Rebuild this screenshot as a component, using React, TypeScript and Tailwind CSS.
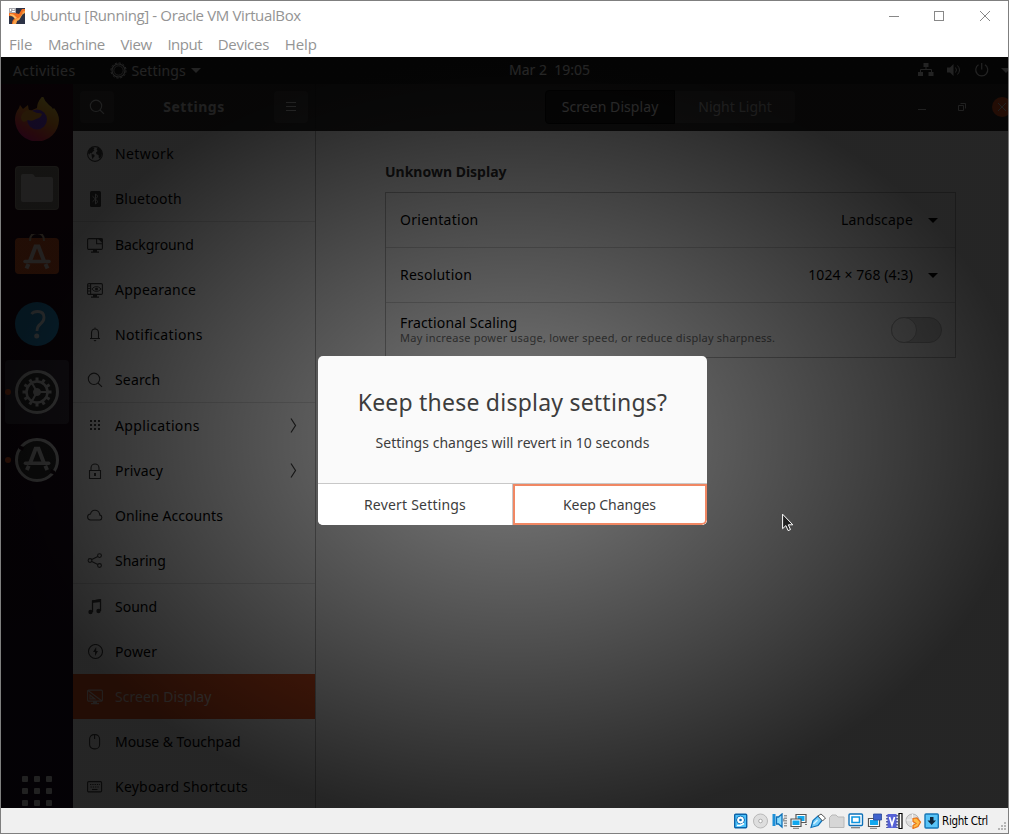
import React from "react";

type IconProps = { name: string };

function Icon({ name }: IconProps) {
  const s = { fill: "none", stroke: "currentColor", strokeWidth: 1.1 } as const;
  const shapes: Record<string, React.ReactNode> = {
    network: (
      <>
        <circle cx="8" cy="8" r="7.4" {...s} />
        <path fill="currentColor" d="M1 6 2.500 3 5.500 1.200 7.500 2 6.500 3.800 7.500 4.500 5.500 6 4.800 7.500 2.800 7 3 8.500 1.500 8z M4.500 8 7 8.500 7.800 10 6.300 11.800 5.800 13.500 4.800 11z M9.500 3 11 1.500 13.500 3.500 15 7 14.500 10 13 12.500 11.800 12 11.500 9 9.500 8.300 9 6.500 10.500 5z" />
      </>
    ),
    bluetooth: (
      <>
        <rect x="3" y="0" width="11" height="16" rx="1.500" fill="currentColor" />
        <path d="M5.500 5.200 11 10.600 8.500 13V3L11 5.400 5.500 10.800" fill="none" stroke="#e6e6e6" strokeWidth="1" />
      </>
    ),
    background: (
      <>
        <rect x=".6" y="1.600" width="14.800" height="10.800" rx="1.200" {...s} />
        <path d="M9.600 1.500v5.300h5.800" {...s} />
        <path d="M10.500 1.500h5v4.500z" fill="currentColor" />
        <path d="M6 12.500h4v2h2v1.200H4v-1.200h2z" fill="currentColor" />
      </>
    ),
    appearance: (
      <>
        <rect x=".6" y="1.600" width="14.800" height="10.800" rx="1.200" {...s} />
        <path d="M3.600 2v10M1 4h2.500M1 6.500h2.500M1 9h2.500" {...s} />
        <path d="M4.800 7q4.500-5 9.400 0-5 5-9.400 0z" {...s} strokeWidth=".9" />
        <circle cx="9.500" cy="7" r="1.500" fill="currentColor" />
        <path d="M6 12.500h4v2h2v1.200H4v-1.200h2z" fill="currentColor" />
      </>
    ),
    bell: (
      <>
        <path d="M3 11.500h10M4.500 11V6Q4.500 2 8 2t3.500 4v5M8 .5V2" {...s} />
        <path d="M6.500 13h3l-1 1.300h-1z" fill="currentColor" />
      </>
    ),
    search: (
      <>
        <circle cx="7" cy="6.800" r="5.700" {...s} />
        <path d="m11 11 4 3.800" {...s} />
      </>
    ),
    apps: (
      <path
        fill="currentColor"
        d="M3 2h2v2H3zM7 2h2v2H7zM11 2h2v2h-2zM3 6h2v2H3zM7 6h2v2H7zM11 6h2v2h-2zM3 10h2v2H3zM7 10h2v2H7zM11 10h2v2h-2z"
      />
    ),
    lock: (
      <>
        <path d="M2.500 7.500h11v8h-11zM4 7.500V5a4 4 0 0 1 8 0v2.500" {...s} />
        <path d="M7 10h2v3H7z" fill="currentColor" />
      </>
    ),
    cloud: <path d="M3.700 12a3 3 0 0 1-.2-6 4.600 4.600 0 0 1 8.900-.6q.6 1 .3 1.500a2.600 2.600 0 0 1 .1 5.100z" {...s} />,
    share: (
      <>
        <circle cx="3" cy="7.500" r="1.900" {...s} />
        <circle cx="12.500" cy="2.600" r="1.900" {...s} />
        <circle cx="12.500" cy="12.500" r="1.900" {...s} />
        <path d="m4.800 6.600 6-3M4.800 8.500l6 3" {...s} />
      </>
    ),
    sound: (
      <>
        <path d="M5.500 13V2l8-1.300V12" {...s} strokeWidth="1.300" />
        <path d="M5 1.500 14 0v3l-9 1z" fill="currentColor" />
        <circle cx="3.500" cy="13" r="2.200" fill="currentColor" />
        <circle cx="11.500" cy="12" r="2.200" fill="currentColor" />
      </>
    ),
    power: (
      <>
        <circle cx="8.500" cy="7.500" r="7" {...s} />
        <path d="m9.200 3-3.200 5h2v4l3-5H9.200z" fill="currentColor" />
      </>
    ),
    display: (
      <>
        <rect x=".6" y="1.100" width="14.800" height="11" rx="1.200" {...s} />
        <path d="m1 1.500 14 10.500M3 6v4h5zM5 8.500v1.500" {...s} />
        <path d="M6 12h4v2h2v1.200H4V14h2z" fill="currentColor" />
      </>
    ),
    mouse: (
      <>
        <rect x="2.600" y=".6" width="10" height="14.300" rx="4.500" {...s} />
        <path d="M7.600 1v4" {...s} />
      </>
    ),
    keyboard: (
      <>
        <rect x=".6" y="2.600" width="14" height="10.300" rx="1.200" {...s} />
        <path d="M3 5.500h10M3.500 8h9" {...s} strokeDasharray="1.300 1" />
        <path d="M5 10.500h5.500" {...s} />
      </>
    ),
  };
  return (
    <svg className="h-4 w-4 shrink-0" viewBox="0 0 16 16">
      {shapes[name]}
    </svg>
  );
}

type Row = { icon: string; label: string; tracking: string; sep?: boolean; arrow?: boolean; active?: boolean };

const rows: Row[] = [
  { icon: "network", label: "Network", tracking: "tracking-[0.4px]" },
  { icon: "bluetooth", label: "Bluetooth", tracking: "tracking-[0.22px]" },
  { icon: "background", label: "Background", tracking: "tracking-[-0.1px]", sep: true },
  { icon: "appearance", label: "Appearance", tracking: "tracking-[0.25px]" },
  { icon: "bell", label: "Notifications", tracking: "tracking-[0.35px]" },
  { icon: "search", label: "Search", tracking: "tracking-[0.15px]" },
  { icon: "apps", label: "Applications", tracking: "tracking-[0.36px]", sep: true, arrow: true },
  { icon: "lock", label: "Privacy", tracking: "tracking-[0.2px]", arrow: true },
  { icon: "cloud", label: "Online Accounts", tracking: "tracking-[0.07px]" },
  { icon: "share", label: "Sharing", tracking: "tracking-normal" },
  { icon: "sound", label: "Sound", tracking: "tracking-normal", sep: true },
  { icon: "power", label: "Power", tracking: "tracking-[0.15px]" },
  { icon: "display", label: "Screen Display", tracking: "tracking-[0.05px]", active: true },
  { icon: "mouse", label: "Mouse & Touchpad", tracking: "tracking-[-0.05px]" },
  { icon: "keyboard", label: "Keyboard Shortcuts", tracking: "tracking-[0.22px]" },
];

function TitleBar() {
  return (
    <div className="flex h-[29px] shrink-0 items-center bg-white pl-2 text-[#949494] font-['Open_Sans',sans-serif]">
      <svg className="h-4 w-4" viewBox="0 0 16 16">
        <path d="M0 0h16v16H0z" fill="#2d3346" />
        <path d="M0 5h6l4 1 3-5h3v3q-3 1-4 4-1 3-4 4l-1 4H3q0-5 4-6-1-2-7-2z" fill="#f37021" />
        <path d="M4 16q0-4 4-5.500 4-1 6-7l2-.5v2q-3 1-4 4-1 3-4 4l-1 3z" fill="#f8a44b" />
        <path d="M1 6q4 0 5 2l2 2-2 1Q4 8 1 7z" fill="#ffc06a" />
        <path d="M0 0h7v5H0z" fill="#a9a9ad" />
        <path d="M1.500 1v2M3.500 1.500h2M3 3.500h3" stroke="#fff" fill="none" />
      </svg>
      <span className="ml-[5px] pb-0.5 text-[15px] leading-5 tracking-[-0.37px] whitespace-nowrap">
        Ubuntu [Running] - Oracle VM VirtualBox
      </span>
      <svg className="mr-4 ml-auto h-3 w-[103px]" viewBox="0 0 103 12" fill="none" stroke="#888" shapeRendering="crispEdges">
        <path d="M0 6.500h10M45.500 1.500h9v9h-9z" />
        <path d="m91 1 10 10M101 1 91 11" shapeRendering="auto" />
      </svg>
    </div>
  );
}

function MenuBar() {
  return (
    <div className="flex h-[27px] shrink-0 items-center gap-[15.7px] bg-white pt-px pl-2 text-[15px] leading-5 tracking-[-0.4px] text-[#949494] font-['Open_Sans',sans-serif]">
      <span className="tracking-[-0.1px]">File</span>
      <span>Machine</span>
      <span>View</span>
      <span className="tracking-[-0.5px]">Input</span>
      <span className="tracking-[-0.3px]">Devices</span>
      <span className="tracking-[-0.1px]">Help</span>
    </div>
  );
}

function TopBar() {
  return (
    <div className="grid h-[27px] shrink-0 grid-cols-[1fr_auto_1fr] items-center bg-[#1b1b1b] text-[14px] leading-5 text-[#e8e8e8]">
      <div className="flex items-center">
        <span className="ml-3 tracking-[0.42px]">Activities</span>
        <svg className="ml-[34px] h-[17px] w-[17px]" viewBox="0 0 17 17" fill="none" stroke="currentColor">
          <circle cx="8.500" cy="8.500" r="6.500" strokeWidth="1.100" />
          <circle cx="8.500" cy="8.500" r="7.600" strokeWidth="1" strokeDasharray="2.200 1.780" />
          <circle cx="8.500" cy="8.500" r="4.700" strokeWidth=".8" />
        </svg>
        <span className="ml-[5px] tracking-[0.12px]">Settings</span>
        <svg className="ml-[5px] h-[5px] w-[10px]" viewBox="0 0 10 5" fill="currentColor">
          <path d="M0 0h10L5 5z" />
        </svg>
      </div>
      <span className="mr-[-79px] pb-0.5 whitespace-pre">Mar 2  19:05</span>
      <div className="flex items-center justify-end pr-2 pb-px">
        <svg className="h-4 w-4" viewBox="0 0 16 16" fill="currentColor">
          <path d="M5.500 1h5v4h-5zM0 10h5v4H0zM10.500 10h5v4h-5z" />
          <path d="M8 5v3M2.500 10V7.500h11V10" fill="none" stroke="currentColor" />
        </svg>
        <svg className="ml-3 h-4 w-4" viewBox="0 0 16 16" fill="currentColor">
          <path d="M1 5.500h3L7.500 2v12L4 10.500H1z" />
          <path d="M9.500 5.500q2 2.500 0 5M11.500 3.500q4 4.500 0 9" fill="none" stroke="currentColor" />
        </svg>
        <svg className="ml-3 h-4 w-4" viewBox="0 0 16 16" fill="none" stroke="currentColor" strokeWidth="1.200">
          <path d="M4.500 2.800a6 6 0 1 0 6.500 0M7.700 1v6.500" />
        </svg>
        <svg className="ml-[11px] h-[5px] w-[10px]" viewBox="0 0 10 5" fill="currentColor">
          <path d="M0 0h10L5 5z" />
        </svg>
      </div>
    </div>
  );
}

function AGlyph({ color }: { color: string }) {
  return (
    <g stroke={color} fill="none" strokeWidth="4">
      <path d="M15 28 20.500 13.500h3L29 28" />
      <path d="M10 28.500h24" strokeLinecap="round" strokeWidth="3.500" />
      <path d="m13.500 31-2 4.500M30.500 31l2 4.500" />
    </g>
  );
}

function Dock() {
  const teeth = Array.from({ length: 12 }, (_, i) => i * 30);
  return (
    <div className="flex w-[72px] shrink-0 flex-col items-center gap-6 bg-[linear-gradient(170deg,#300a1c,#1d0918_35%,#180a24)] pt-[13px]">
      <svg className="h-11 w-11 shrink-0" viewBox="0 0 44 44">
        <defs>
          <linearGradient id="ff" x1=".8" y1="0" x2=".25" y2="1">
            <stop offset="0" stopColor="#fff04a" />
            <stop offset=".45" stopColor="#ff9422" />
            <stop offset=".8" stopColor="#ff3654" />
            <stop offset="1" stopColor="#e31590" />
          </linearGradient>
        </defs>
        <path d="M22 44.500A22 22 0 0 1 0 23q0-7 4-12l1-3 3 4 5-4q0 4 2 6l7-3q0-6 6-12.500 1 5.500 6 9.500 3 2 4 4l1-1q5 6 5 12a22 22 0 0 1-22 21.500z" fill="url(#ff)" />
        <circle cx="22" cy="22.500" r="10" fill="#7b3fe4" />
        <path d="M6 20q1-6 9-7l7 3q4 0 5 1-1 4-6 5-4 3-8 1l-4 2q-3-1-3-5z" fill="#ffa42c" />
      </svg>
      <svg className="mt-[1px] h-11 w-11 shrink-0" viewBox="0 0 44 44">
        <rect width="44" height="44" rx="4" fill="#a19a8c" />
        <rect x="1" y="1" width="42" height="42" rx="3" fill="#88827a" />
        <path d="M6 10q0-2 2-2h9q2 0 3 3h16q2 0 2 2v21q0 2-2 2H8q-2 0-2-2z" fill="#d6d2cd" />
      </svg>
      <svg className="h-11 w-11 shrink-0" viewBox="0 0 44 44">
        <rect y="4" width="44" height="36" rx="4" fill="#e05a24" />
        <path d="M15 7Q15-1 22-1t7 8" fill="none" stroke="#d3b99b" strokeWidth="2" />
        <g transform="translate(0 -1)">
          <AGlyph color="#e9dcd5" />
        </g>
      </svg>
      <svg className="h-11 w-11 shrink-0" viewBox="0 0 44 44">
        <circle cx="22" cy="22" r="22" fill="#2391cf" />
        <path d="M16.500 12q2-2.500 6-2.500 6.500 0 6.500 6 0 3.500-3.500 6.500-3.500 2.500-3.500 7" fill="none" stroke="#e3eef5" strokeWidth="2.800" />
        <circle cx="21.700" cy="34" r="2.500" fill="#e3eef5" />
      </svg>
      <div className="relative -my-[10px] flex h-16 w-16 shrink-0 items-center justify-center rounded bg-[#3b3140]">
        <span className="absolute top-[29px] left-0 h-1.5 w-1.5 rounded-full bg-[#e95420]" />
        <svg className="h-11 w-11" viewBox="0 0 44 44" fill="none" stroke="#d8d8d8">
          <circle cx="22" cy="22" r="20.500" strokeWidth="3" fill="#333" />
          <circle cx="22" cy="22" r="10.500" strokeWidth="2.500" />
          <circle cx="22" cy="22" r="3.500" fill="#d8d8d8" />
          <path d="M22 22h10M22 22l-5-9M22 22l-5 9" strokeWidth="2" />
          {teeth.map((a) => (
            <path key={a} d="M22 11V7.500" strokeWidth="3" transform={`rotate(${a} 22 22)`} />
          ))}
        </svg>
      </div>
      <div className="relative flex w-16 shrink-0 justify-center">
        <span className="absolute top-[19px] left-0 h-1.5 w-1.5 rounded-full bg-[#e95420]" />
        <svg className="h-11 w-11" viewBox="0 0 44 44">
          <circle cx="22" cy="22" r="20.500" fill="#333" stroke="#d8d8d8" strokeWidth="3" />
          <g transform="translate(.7 -2.400) scale(.97)">
            <AGlyph color="#d8d8d8" />
          </g>
          <path d="m3 7 6 2-1 4-4-2zM41 37l-6-2 1-4 4 2z" fill="#1d0918" />
        </svg>
      </div>
      <svg className="mt-[270px] h-[30px] w-[30px] shrink-0" viewBox="0 0 30 30" fill="#dcdcdc">
        {[0, 12, 24].map((y) => [0, 12, 24].map((x) => <rect key={`${x}-${y}`} x={x} y={y} width="6" height="6" rx="1" />))}
      </svg>
    </div>
  );
}

function HeaderBar() {
  return (
    <div className="flex h-[47px] shrink-0 bg-[#2d2b2b] pb-0.5 text-[14px] leading-5 text-[#d5d5d5]">
      <div className="flex w-[243px] shrink-0 items-center justify-between border-r border-[#232323] px-[7px]">
        <div className="flex h-8 w-[34px] items-center justify-center rounded bg-[#403e3e]">
          <Icon name="search" />
        </div>
        <span className="font-bold tracking-[0.5px]">Settings</span>
        <div className="flex h-8 w-[34px] items-center justify-center rounded bg-[#403e3e]">
          <svg className="h-3 w-3" viewBox="0 0 12 12" stroke="currentColor">
            <path d="M1 1.500h10M1 5.500h10M1 9.500h10" />
          </svg>
        </div>
      </div>
      <div className="flex flex-1 items-center">
        <div className="ml-[229px] flex h-[34px] w-[130px] items-center justify-center rounded-l border border-[#050505] bg-[#151414] tracking-[0.07px]">
          Screen Display
        </div>
        <div className="flex h-8 w-[120px] items-center justify-center rounded-r bg-[#403e3e] text-[#b5b5b5]">Night Light</div>
        <svg className="ml-[123px] h-5 w-[94px] shrink-0" viewBox="0 0 94 20" fill="none" stroke="currentColor">
          <path d="M0 12.500h8" />
          <path d="M40.500 8.500h5v5h-5zM42.500 6.500h5v5" />
          <circle cx="84" cy="10" r="10" fill="#e95420" stroke="none" />
          <path d="m80 6 8 8M88 6l-8 8" />
        </svg>
      </div>
    </div>
  );
}

function Sidebar() {
  return (
    <div className="flex w-[243px] shrink-0 flex-col border-r border-[#b0b0b0]">
      {rows.map((r) => (
        <div
          key={r.label}
          className={
            (r.sep ? "h-[46px] border-t border-[#dcdcdc] " : "h-[45px] ") +
            (r.active ? "bg-[#e95420] text-[#e8d5cd] " : "text-[#404040] ") +
            "flex shrink-0 items-center pr-4 pl-[14px]"
          }
        >
          <Icon name={r.icon} />
          <span className={(r.active ? "" : "text-black ") + r.tracking + " ml-3 text-[14px] leading-5 whitespace-nowrap"}>
            {r.label}
          </span>
          {r.arrow && (
            <svg className="ml-auto h-4 w-3" viewBox="0 0 12 16" fill="none" stroke="currentColor" strokeWidth="1.200">
              <path d="m4 .5 4.500 7L4 14.500" />
            </svg>
          )}
        </div>
      ))}
    </div>
  );
}

function Caret() {
  return (
    <svg className="ml-[15px] h-[5px] w-[10px]" viewBox="0 0 10 5" fill="currentColor">
      <path d="M0 0h10L5 5z" />
    </svg>
  );
}

function DisplayPanel() {
  return (
    <div className="flex flex-1 flex-col pt-[31px] pl-[69px] text-[14px] leading-5 text-black">
      <span className="font-bold text-[#303030]">Unknown Display</span>
      <div className="mt-[10px] flex h-[166px] w-[571px] flex-col border border-[#b4b4b4]">
        <div className="flex h-[55px] items-center border-b border-[#d0d0d0] pr-[17px] pl-[14px]">
          <span className="tracking-[0.27px]">Orientation</span>
          <span className="ml-auto tracking-[0.2px]">Landscape</span>
          <Caret />
        </div>
        <div className="flex h-[55px] items-center border-b border-[#d0d0d0] pr-[17px] pl-[14px]">
          <span className="tracking-[0.22px]">Resolution</span>
          <span className="ml-auto tracking-[0.1px]">1024 × 768 (4:3)</span>
          <Caret />
        </div>
        <div className="flex h-[54px] items-center pr-[13px] pl-[14px]">
          <div className="flex flex-col pb-0.5">
            <span className="leading-[17px] tracking-[0.13px]">Fractional Scaling</span>
            <span className="text-[11px] leading-[14px] tracking-[0.24px] text-[#707070]">
              May increase power usage, lower speed, or reduce display sharpness.
            </span>
          </div>
          <div className="ml-auto flex h-[26px] w-[51px] rounded-full border border-[#b4b4b4] bg-[#d6d6d6]">
            <div className="-m-px h-[26px] w-[26px] rounded-full border border-[#b4b4b4] bg-[#f4f4f4]" />
          </div>
        </div>
      </div>
    </div>
  );
}

function ConfirmDialog() {
  return (
    <div className="absolute top-[299px] left-[317px] flex h-[169px] w-[389px] flex-col overflow-hidden rounded-[5px] bg-[#fafafa] text-[#3d3d3d]">
      <div className="flex h-[127px] flex-col items-center pt-[30px]">
        <span className="text-[23px] leading-8 tracking-[0.22px] whitespace-nowrap">Keep these display settings?</span>
        <span className="mt-[15px] text-[14px] leading-5 tracking-[0.02px] whitespace-nowrap">Settings changes will revert in 10 seconds</span>
      </div>
      <div className="flex flex-1 border-t border-[#c8c8c8] bg-white text-[14px] leading-5">
        <div className="flex w-[195px] items-center justify-center border-r border-[#c8c8c8] tracking-[0.2px]">Revert Settings</div>
        <div className="flex flex-1 items-center justify-center rounded-br-[5px] border-2 border-[#f08763] pr-px tracking-[-0.08px]">
          Keep Changes
        </div>
      </div>
    </div>
  );
}

function StatusBar() {
  return (
    <div className="flex h-[25px] shrink-0 items-center bg-[#f0f0f0] pl-[732px] text-black">
      <svg className="h-4 w-[206px] shrink-0" viewBox="0 0 206 16" fill="none">
        <rect x="1.700" y="1.200" width="12" height="13.600" rx="1" fill="#4cc3fb" stroke="#0b62a8" strokeWidth="1.400" />
        <circle cx="7.500" cy="7" r="4" fill="#fff" stroke="#0d70b8" />
        <circle cx="7.500" cy="7" r="1.300" fill="#0d70b8" />
        <path d="M4 12.500h3l4-2" stroke="#fff" strokeWidth="1.500" />
        <circle cx="27.500" cy="8" r="7" fill="#dedede" stroke="#b8b8b8" />
        <circle cx="27.500" cy="8" r="1.800" fill="#fff" stroke="#aaa" />
        <path d="M39.500 1h3v12h-3z" fill="#1e90d8" />
        <path d="M43.500 4h2l3.500-3v13l-3.500-3h-2z" fill="#8bdcff" stroke="#0d70b8" strokeWidth="1.300" />
        <path d="M50 7h2M52.500 2v12" stroke="#999" strokeDasharray="1.500 1" strokeWidth="3" />
        <path d="M63 1.500h10v8H63z" fill="#fff" stroke="#555" strokeWidth="1.200" />
        <path d="M64.500 3h7v5h-7z" fill="#11a8ef" />
        <path d="M58 6h10v7.500H58z" fill="#fff" stroke="#555" strokeWidth="1.200" />
        <path d="M59.500 7.500h7v4.500h-7z" fill="#11a8ef" />
        <path d="M60 15.300h6M72 11.500h2" stroke="#777" />
        <path d="m78 14.500 2-7 5-4.500 4.500 4-4.500 5.500z" fill="#72cdfa" stroke="#0d70b8" strokeWidth="1.200" />
        <path d="m85 3 3-2 4.500 4-3 3z" fill="#fff" stroke="#555" />
        <path d="m80.500 11 4-4" stroke="#d8f3ff" strokeWidth="1.500" />
        <path d="M96.500 4.500 99 2h4l2 2h6v10.500H96.500z" fill="#d6d6d6" stroke="#b8b8b8" />
        <rect x="116" y="1" width="13.500" height="11.500" rx="1" fill="#fff" stroke="#0d70b8" strokeWidth="1.400" />
        <path d="M119 4h7.500v5.500H119z" fill="#fff" stroke="#0e95df" strokeWidth="1.600" />
        <path d="M118 14.700h9" stroke="#777" strokeWidth="1.200" />
        <path d="M135.500 5.500h11v8h-11z" fill="#fff" stroke="#555" strokeWidth="1.200" />
        <path d="M137 7h8v5h-8z" fill="#11a8ef" />
        <path d="M140.500 1h8v6h-8z" fill="#3f62cc" stroke="#294798" strokeWidth=".8" />
        <path d="M137 15.300h7" stroke="#777" />
        <path d="M154.500 1h9v14h-9z" fill="#5561d6" />
        <path d="M154 2v13M164 2v13" stroke="#333a90" strokeWidth="1.500" strokeDasharray="1.500 1.500" />
        <path d="m156.500 4 2.500 8 2.500-8" stroke="#fff" strokeWidth="1.700" />
        <path d="M166 .5h3v15h-3z" fill="#fff" stroke="#000" strokeWidth="1.200" />
        <circle cx="179.500" cy="7.500" r="6.500" fill="#dcdcdc" stroke="#b5b5b5" />
        <path d="M173.500 7h12M179.500 1v13" stroke="#f5f5f5" />
        <path d="m180 5.500 4-.5 3.500 4-2.500 4.500-5 2v-3l3-2-3-2z" fill="#ffbc45" stroke="#e8731a" strokeWidth="1.200" />
        <rect x="192" y="1" width="13.300" height="14" rx="1" fill="#58c4f8" stroke="#1675b5" strokeWidth="1.400" />
        <path d="M197 4h3.500v3.500h2.500L198.700 12l-4.200-4.500h2.500z" fill="#10283c" />
      </svg>
      <span className="ml-[3px] text-[11.500px] leading-4 tracking-[-0.3px] whitespace-nowrap font-['DejaVu_Sans_Condensed','DejaVu_Sans',sans-serif]">
        Right Ctrl
      </span>
      <svg className="mr-[2px] mb-[3px] ml-auto h-2 w-2 self-end" viewBox="0 0 8 8" fill="#b5b5b5">
        <path d="M6 0h2v2H6zM3 3h2v2H3zM6 3h2v2H6zM0 6h2v2H0zM3 6h2v2H3zM6 6h2v2H6z" />
      </svg>
    </div>
  );
}

export default function App() {
  return (
    <div className="flex h-[834px] w-[1009px] flex-col overflow-hidden border border-[#7f7f7f] bg-white">
      <TitleBar />
      <MenuBar />
      <div className="relative h-[751px] shrink-0 overflow-hidden bg-black font-['Noto_Sans',sans-serif]">
        <div className="flex h-[768px] w-[1024px] flex-col">
          <div className="flex w-[1018px] shrink-0 flex-col">
            <TopBar />
          </div>
          <div className="flex min-h-0 flex-1 overflow-hidden">
            <Dock />
            <div className="flex flex-1 flex-col bg-[#fafafa]">
              <HeaderBar />
              <div className="flex min-h-0 flex-1 overflow-hidden">
                <Sidebar />
                <DisplayPanel />
              </div>
            </div>
          </div>
        </div>
        <div className="absolute top-0 left-0 h-[768px] w-[1024px] bg-[radial-gradient(ellipse_512px_384px_at_center,rgba(0,0,0,0.5),rgba(0,0,0,0.85))]" />
        <ConfirmDialog />
        <svg className="absolute top-[456px] left-[781px] h-[19px] w-3" viewBox="0 0 12 19">
          <path d="M.6 1.200v14.500l3.300-3.100 2.200 5 2.400-1-2.200-4.800h4.500z" fill="#222" stroke="#fff" />
        </svg>
      </div>
      <StatusBar />
    </div>
  );
}
